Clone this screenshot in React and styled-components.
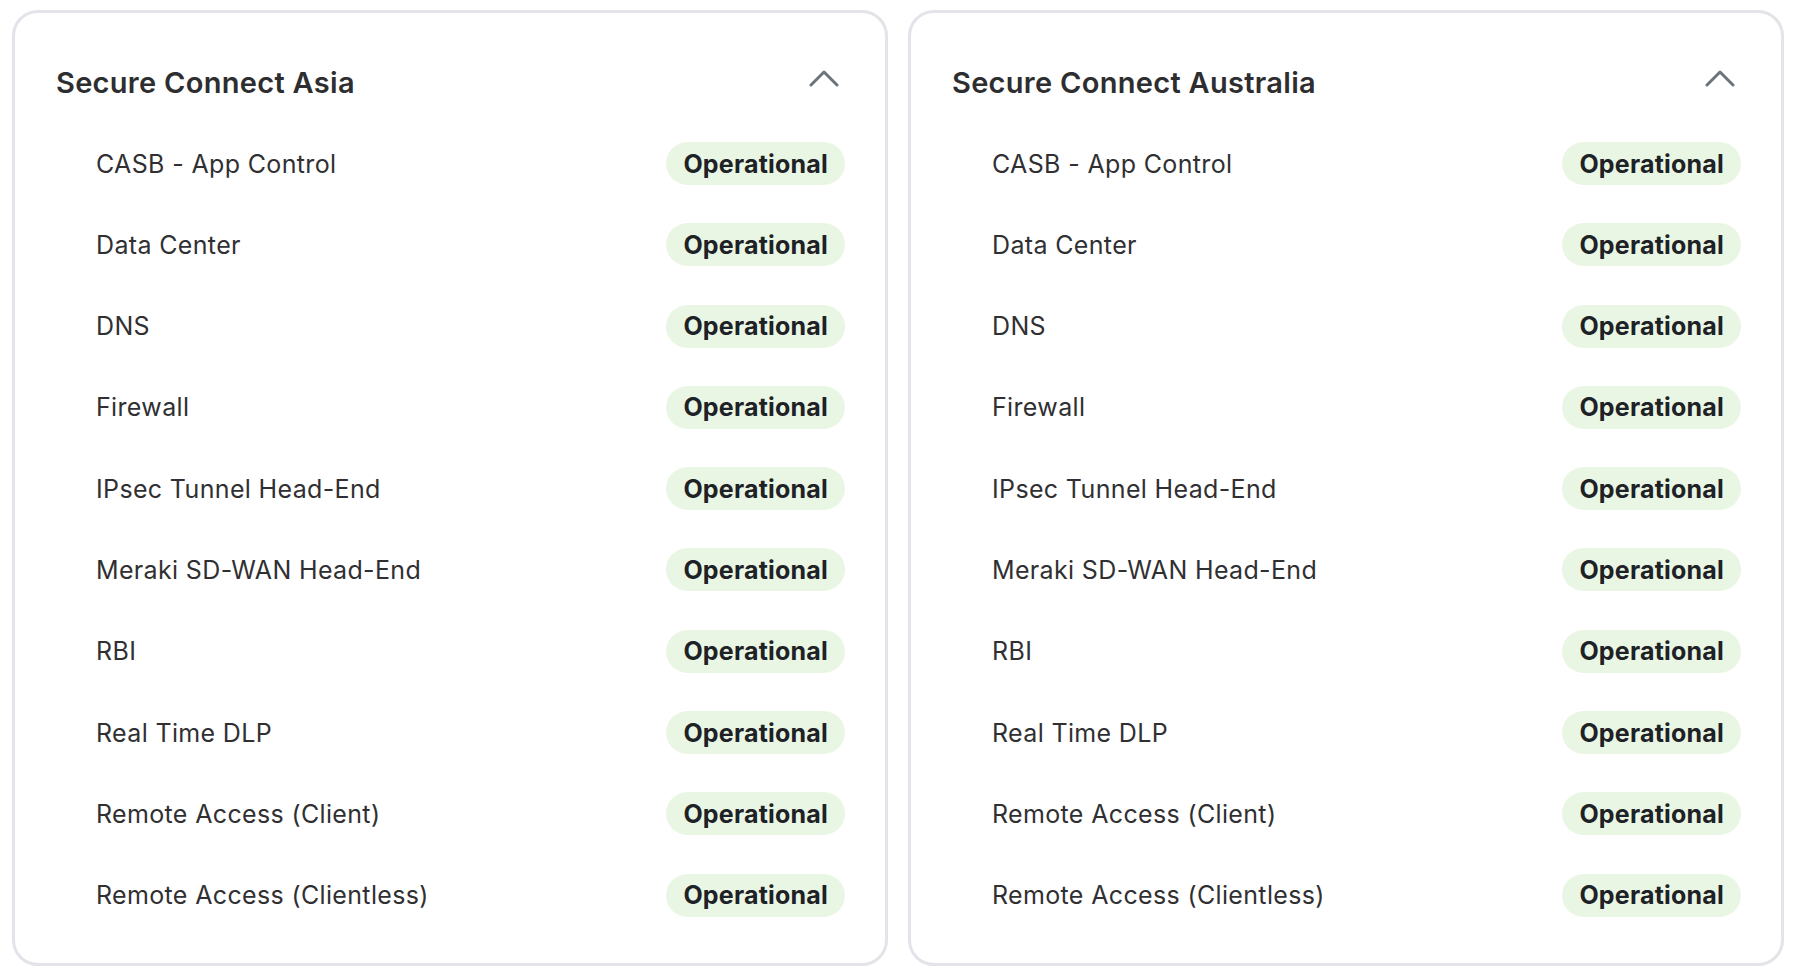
import React from "react";
import styled, { createGlobalStyle } from "styled-components";

const GlobalStyle = createGlobalStyle`
  html, body {
    margin: 0;
    padding: 0;
    background: #ffffff;
  }
  body {
    font-family: Inter, "Noto Sans", "Liberation Sans", sans-serif;
    -webkit-font-smoothing: antialiased;
  }
`;

const Page = styled.div`
  padding: 10px 0 0 12px;
`;

const Grid = styled.div`
  display: grid;
  grid-template-columns: 1fr 1fr;
  gap: 20px;
  width: 1772px;
`;

const Card = styled.section`
  box-sizing: border-box;
  border: 3px solid #e3e3e9;
  border-radius: 26px;
  padding: 53px 40px 46px 41px;
  background: #ffffff;
`;

const Header = styled.div`
  display: flex;
  align-items: center;
  justify-content: space-between;
  padding-right: 6px;
  margin-bottom: 42px;
`;

const Title = styled.h2`
  margin: 0;
  font-size: 29px;
  line-height: 34px;
  font-weight: 600;
  color: #2e2e30;
  letter-spacing: 0.3px;
`;

const Toggle = styled.button`
  display: flex;
  border: 0;
  padding: 0;
  background: none;
  margin-bottom: 10px;
  cursor: pointer;
`;

const List = styled.ul`
  list-style: none;
  margin: 0;
  padding: 0;
  display: flex;
  flex-direction: column;
  gap: 38.3px;
`;

const Row = styled.li`
  display: flex;
  align-items: center;
  justify-content: space-between;
  padding-left: 40px;
`;

const Label = styled.span`
  font-size: 25px;
  color: #303033;
  font-weight: 400;
  letter-spacing: 0.35px;
`;

const Badge = styled.span`
  display: inline-flex;
  align-items: center;
  height: 43px;
  padding: 0 17px;
  border-radius: 22px;
  font-size: 25px;
  font-weight: 700;
  letter-spacing: 0.2px;
  color: ${(p) => (p.$status === "ok" ? "#1e2126" : "#5a1a1a")};
  background: ${(p) => (p.$status === "ok" ? "#e9f6e4" : "#fbe4e4")};
`;

const services = [
  "CASB - App Control",
  "Data Center",
  "DNS",
  "Firewall",
  "IPsec Tunnel Head-End",
  "Meraki SD-WAN Head-End",
  "RBI",
  "Real Time DLP",
  "Remote Access (Client)",
  "Remote Access (Clientless)",
];

const regions = ["Secure Connect Asia", "Secure Connect Australia"];

const ChevronUp = () => (
  <svg width="30" height="18" viewBox="0 0 30 18" fill="none">
    <polyline
      points="2,16 15,3 28,16"
      stroke="#6d747c"
      strokeWidth="3"
      strokeLinecap="round"
      strokeLinejoin="round"
    />
  </svg>
);

const RegionCard = ({ name }) => (
  <Card>
    <Header>
      <Title>{name}</Title>
      <Toggle aria-label="Collapse">
        <ChevronUp />
      </Toggle>
    </Header>
    <List>
      {services.map((s) => (
        <Row key={s}>
          <Label>{s}</Label>
          <Badge $status="ok">Operational</Badge>
        </Row>
      ))}
    </List>
  </Card>
);

export default function App() {
  return (
    <>
      <GlobalStyle />
      <Page>
        <Grid>
          {regions.map((r) => (
            <RegionCard key={r} name={r} />
          ))}
        </Grid>
      </Page>
    </>
  );
}
